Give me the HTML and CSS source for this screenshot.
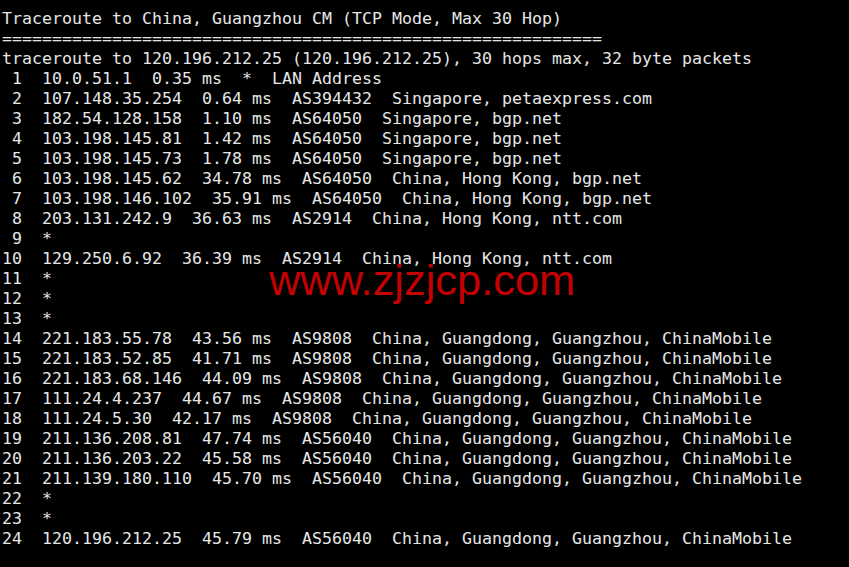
FILE: index.html
```html
<!DOCTYPE html>
<html>
<head>
<meta charset="utf-8">
<link rel="stylesheet" href="styles.css">
</head>
<body>
<div class="term">
<pre class="out">Traceroute to China, Guangzhou CM (TCP Mode, Max 30 Hop)
============================================================
traceroute to 120.196.212.25 (120.196.212.25), 30 hops max, 32 byte packets
 1  10.0.51.1  0.35 ms  *  LAN Address
 2  107.148.35.254  0.64 ms  AS394432  Singapore, petaexpress.com
 3  182.54.128.158  1.10 ms  AS64050  Singapore, bgp.net
 4  103.198.145.81  1.42 ms  AS64050  Singapore, bgp.net
 5  103.198.145.73  1.78 ms  AS64050  Singapore, bgp.net
 6  103.198.145.62  34.78 ms  AS64050  China, Hong Kong, bgp.net
 7  103.198.146.102  35.91 ms  AS64050  China, Hong Kong, bgp.net
 8  203.131.242.9  36.63 ms  AS2914  China, Hong Kong, ntt.com
 9  *
10  129.250.6.92  36.39 ms  AS2914  China, Hong Kong, ntt.com
11  *
12  *
13  *
14  221.183.55.78  43.56 ms  AS9808  China, Guangdong, Guangzhou, ChinaMobile
15  221.183.52.85  41.71 ms  AS9808  China, Guangdong, Guangzhou, ChinaMobile
16  221.183.68.146  44.09 ms  AS9808  China, Guangdong, Guangzhou, ChinaMobile
17  111.24.4.237  44.67 ms  AS9808  China, Guangdong, Guangzhou, ChinaMobile
18  111.24.5.30  42.17 ms  AS9808  China, Guangdong, Guangzhou, ChinaMobile
19  211.136.208.81  47.74 ms  AS56040  China, Guangdong, Guangzhou, ChinaMobile
20  211.136.203.22  45.58 ms  AS56040  China, Guangdong, Guangzhou, ChinaMobile
21  211.139.180.110  45.70 ms  AS56040  China, Guangdong, Guangzhou, ChinaMobile
22  *
23  *
24  120.196.212.25  45.79 ms  AS56040  China, Guangdong, Guangzhou, ChinaMobile</pre>
<div class="watermark">www.zjzjcp.com</div>
</div>
</body>
</html>
```
FILE: styles.css
```css
html, body {
  margin: 0;
  padding: 0;
  background: #000;
  width: 849px;
  height: 567px;
  overflow: hidden;
}
.term {
  position: relative;
  width: 849px;
  height: 567px;
  background: #000;
  padding: 9px 0 0 2px;
  box-sizing: border-box;
}
.out {
  margin: 0;
  font-family: "DejaVu Sans Mono", monospace;
  font-size: 16.61px;
  line-height: 20px;
  color: #e6e6e6;
  white-space: pre;
}
.watermark {
  position: absolute;
  left: 269px;
  top: 255px;
  font-family: "Liberation Sans", Arial, sans-serif;
  font-size: 43.4px;
  line-height: 50px;
  color: #c40000;
  white-space: nowrap;
}
```
